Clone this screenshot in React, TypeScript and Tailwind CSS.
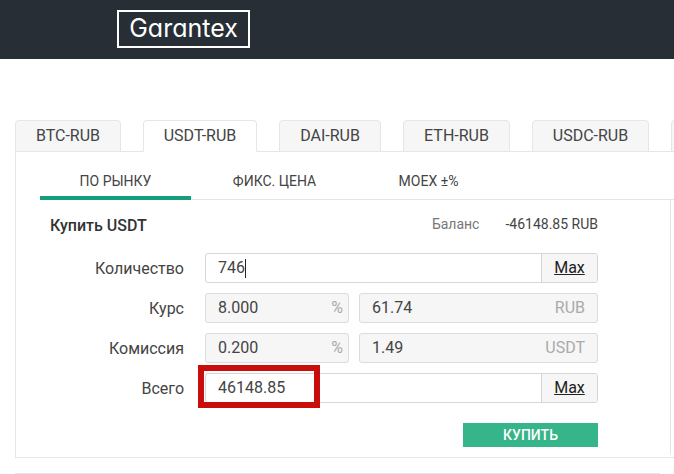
const tabs = [
  { label: "BTC-RUB", width: "w-[106px]" },
  { label: "USDT-RUB", width: "w-[114px]", active: true },
  { label: "DAI-RUB", width: "w-[102px]" },
  { label: "ETH-RUB", width: "w-[107px]" },
  { label: "USDC-RUB", width: "w-[117px]" },
  { label: "", width: "w-[40px]" },
];

const subTabs = [
  { label: "ПО РЫНКУ", width: "w-[151px]", active: true },
  { label: "ФИКС. ЦЕНА", width: "w-[167px]" },
  { label: "MOEX ±%", width: "w-[141px]" },
];

function Label({ children }: { children: string }) {
  return <div className="mr-[21px] h-[30px] w-[134px] shrink-0 pt-px text-right text-[16px] leading-[30px] text-[#444]">{children}</div>;
}

function ReadOnly({ value, unit, className }: { value: string; unit: string; className: string }) {
  return (
    <div className={`flex h-[30px] items-center justify-between rounded-[3px] border border-[#dcdcdc] bg-[#f6f6f6] pl-3 text-[16px] ${className}`}>
      <span className="text-[#444]">{value}</span>
      <span className="text-[#aaa]">{unit}</span>
    </div>
  );
}

function MaxInput({ value, caret }: { value: string; caret?: boolean }) {
  return (
    <div className="flex h-[30px] w-[393px] rounded-[3px] border border-[#d6d6d6] text-[16px]">
      <div className="flex flex-1 items-center px-3 text-[#444]">
        {value}
        {caret && <span className="h-[19px] w-px bg-[#222]" />}
      </div>
      <div className="flex w-[56px] items-center justify-center rounded-r-[3px] border-l border-[#d6d6d6] bg-[#f6f6f6] text-[#222] underline">Max</div>
    </div>
  );
}

export default function App() {
  return (
    <div className="relative h-[474px] w-[674px] overflow-hidden bg-white font-['Roboto',sans-serif]">
      <header className="h-[59px] bg-[#272e36] pl-[117px] pt-[10px]">
        <div className="flex h-[38px] w-[133px] items-center justify-center border-2 border-white font-['Inter',sans-serif] text-[25px] font-normal text-white [font-feature-settings:'cv11']">
          Garantex
        </div>
      </header>

      <div className="ml-[15px] mt-[61px] flex gap-[22px]">
        {tabs.map((t) => (
          <div
            key={t.width + t.label}
            className={`relative z-10 flex h-[32px] shrink-0 items-center justify-center rounded-t-[4px] border border-[#e6e6e6] text-[16px] text-[#444] ${t.width} ${
              t.active ? "border-b-white bg-white" : "bg-[#f6f6f6]"
            }`}
          >
            {t.label}
          </div>
        ))}
      </div>

      <section className="-mt-px ml-[15px] h-[307px] w-[670px] border border-[#e6e6e6] pl-[24px]">
        <div className="flex h-[48px] border-b border-[#e4e4e4]">
          {subTabs.map((t) => (
            <div
              key={t.label}
              className={`flex h-[48px] shrink-0 items-start justify-center pt-[21px] text-[14px] leading-[16px] text-[#444] ${t.width} ${
                t.active ? "border-b-4 border-[#149e7c]" : ""
              }`}
            >
              {t.label}
            </div>
          ))}
        </div>

        <div className="flex h-[254px] w-[631px] border-r border-[#e4e4e4] pl-[10px] pt-[14px]">
          <div className="w-[548px]">
            <div className="flex h-[24px] items-center justify-between">
              <span className="text-[16px] font-medium text-[#333]">Купить USDT</span>
              <div className="-mt-[3px] flex gap-[26px] text-[14px]">
                <span className="text-[#777]">Баланс</span>
                <span className="text-[#444]">-46148.85 RUB</span>
              </div>
            </div>

            <div className="mt-[15px] flex flex-col gap-[10px]">
              <div className="flex">
                <Label>Количество</Label>
                <MaxInput value="746" caret />
              </div>
              <div className="flex">
                <Label>Курс</Label>
                <ReadOnly value="8.000" unit="%" className="w-[144px] pr-[5px]" />
                <ReadOnly value="61.74" unit="RUB" className="ml-[10px] w-[239px] pr-3" />
              </div>
              <div className="flex">
                <Label>Комиссия</Label>
                <ReadOnly value="0.200" unit="%" className="w-[144px] pr-[5px]" />
                <ReadOnly value="1.49" unit="USDT" className="ml-[10px] w-[239px] pr-3" />
              </div>
              <div className="flex">
                <Label>Всего</Label>
                <MaxInput value="46148.85" />
              </div>
            </div>

            <div className="mt-[20px] flex justify-end">
              <button className="h-[24px] w-[135px] bg-[#36b48a] text-[14px] font-medium text-white">КУПИТЬ</button>
            </div>
          </div>
        </div>
      </section>

      <div className="ml-[15px] mt-[15px] w-[645px] border-t border-[#e6e6e6]" />

      {/* red highlight drawn over the screenshot */}
      <div className="absolute left-[198px] top-[365px] h-[43px] w-[122px] border-[6px] border-[#c90d0d]" />
    </div>
  );
}
